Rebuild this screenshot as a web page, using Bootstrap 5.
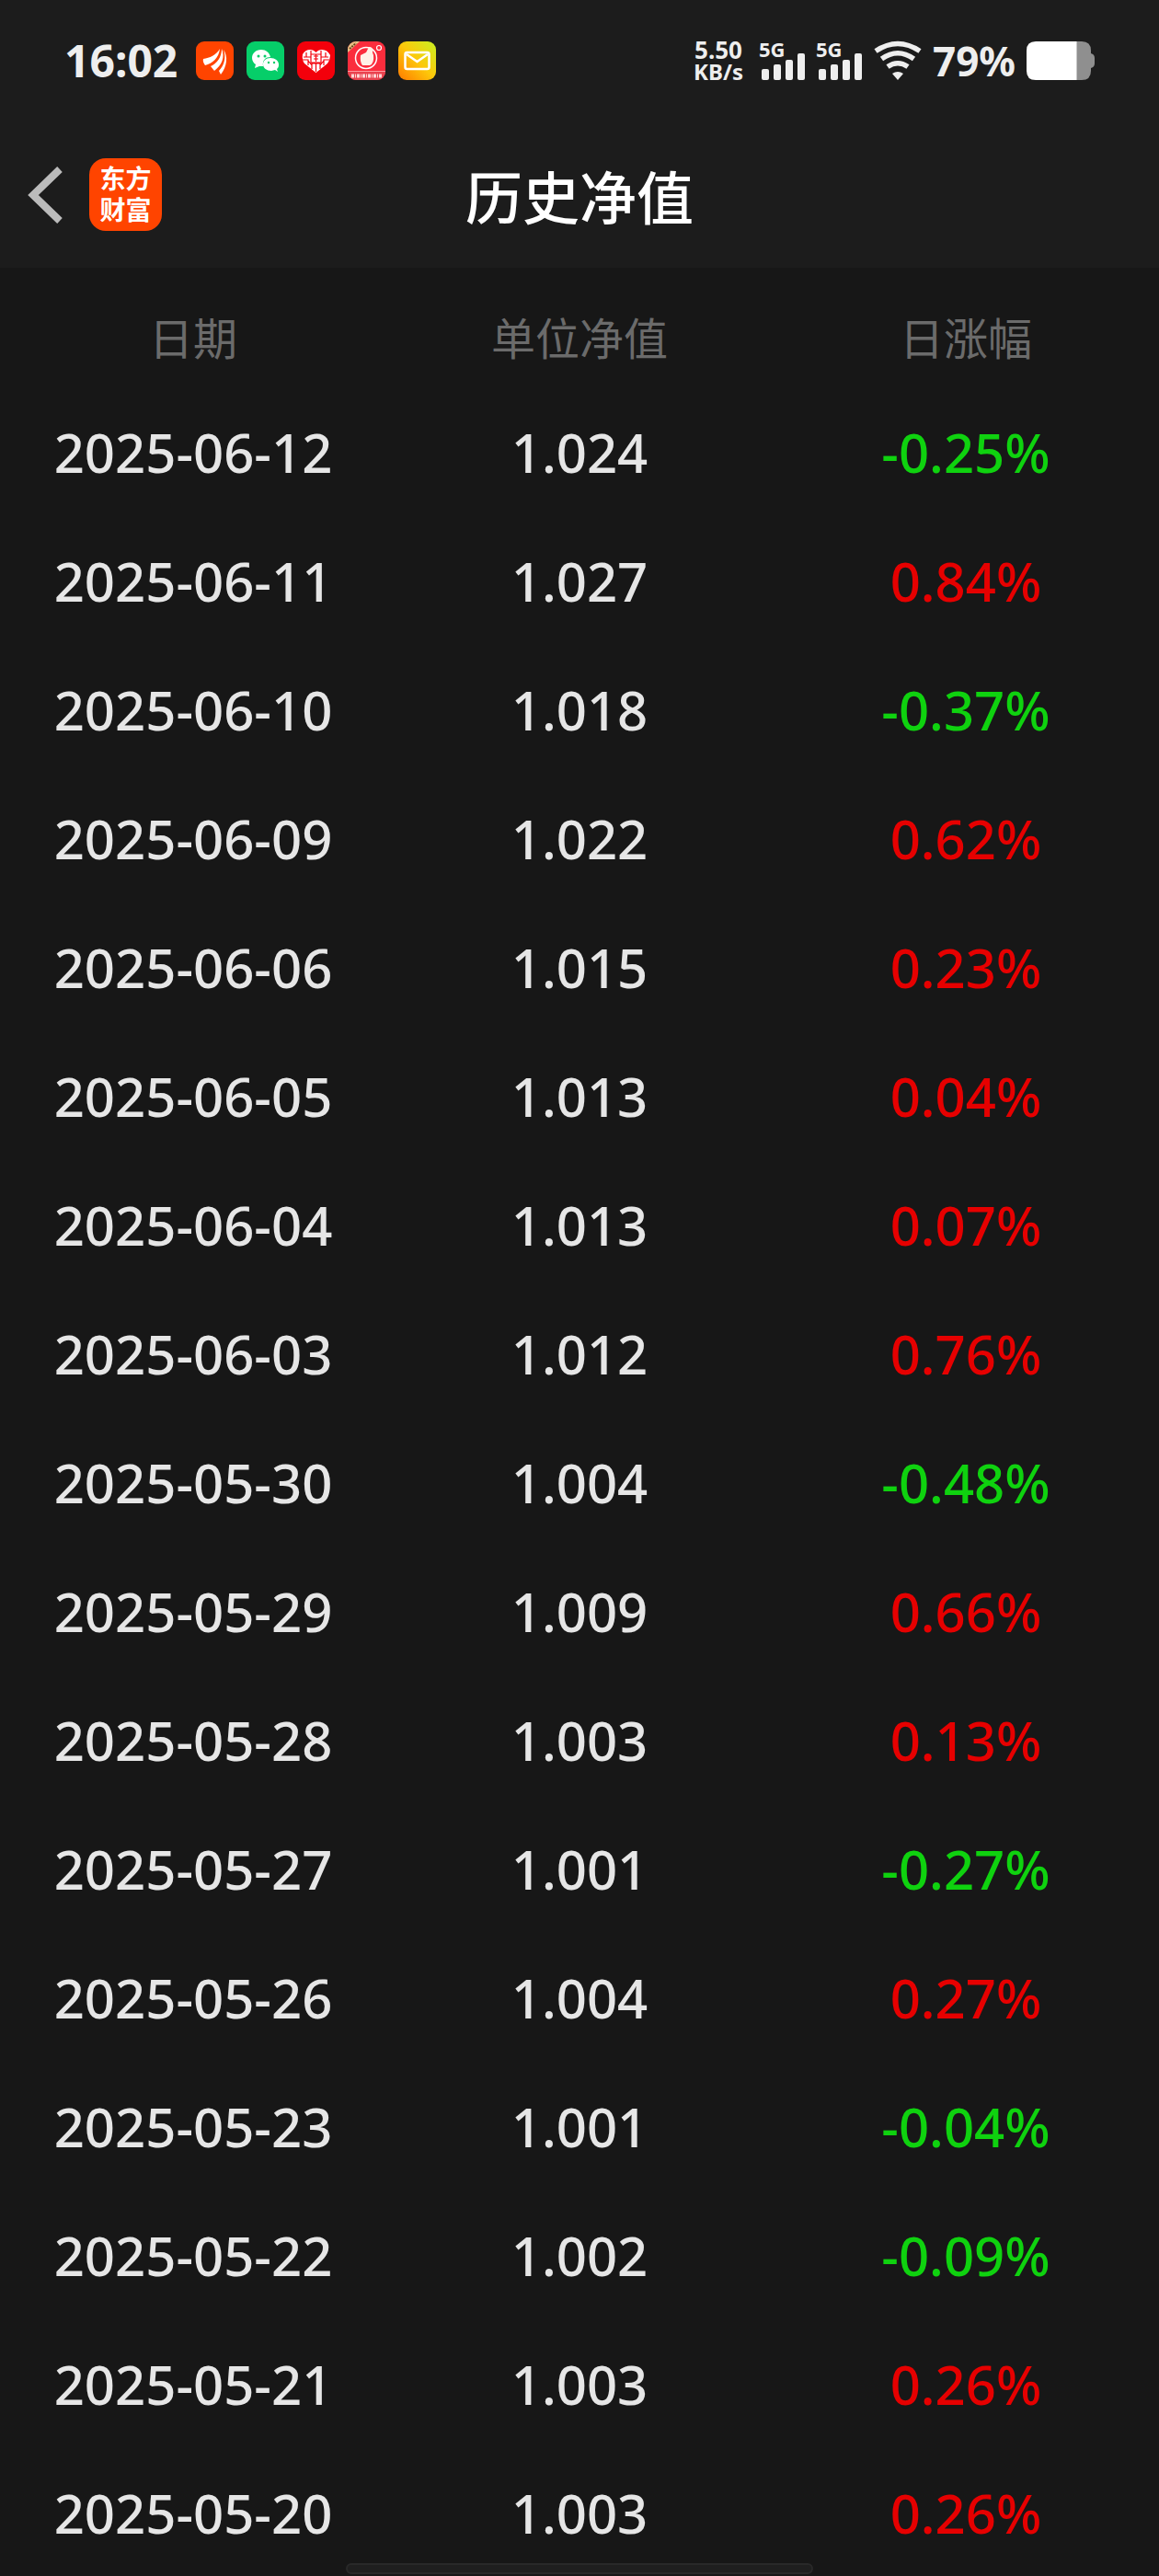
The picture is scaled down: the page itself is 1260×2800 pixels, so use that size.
<!DOCTYPE html>
<html lang="zh-CN">
<head>
<meta charset="utf-8">
<meta name="viewport" content="width=device-width, initial-scale=1">
<title>历史净值</title>
<link href="https://cdn.jsdelivr.net/npm/bootstrap@5.3.0/dist/css/bootstrap.min.css" rel="stylesheet">
<style>
  body { background: #171717; color: #e6e6e6; font-family: "Noto Sans", "Noto Sans CJK SC", sans-serif; }
  .top-area { background: #1c1c1c; }
  .status-bar { height: 132px; padding: 0 70px; color: #eee; font-weight: 700; }
  .clock { font-size: 48px; line-height: 60px; }
  .app-icons { gap: 14px; margin-left: 20px; }
  .net-speed { margin-right: 18px; font-size: 26px; line-height: 24px; }
  .net-speed small { font-size: 24px; line-height: 24px; }
  .pct { margin: 0 12px; font-size: 44px; line-height: 60px; }
  .status-bar svg, .title-bar svg { display: block; flex: none; overflow: visible; }
  .title-bar { height: 159px; }
  .title-bar h1 { font: 500 62px/80px "Noto Sans CJK SC", sans-serif; color: #fff; }
  .tools { left: 30px; gap: 28px; }
  .brand { width: 79px; height: 79px; padding-bottom: 3px; border-radius: 18px; background: #ff4400; color: #fff; font: 700 28px/34px "Noto Sans CJK SC", sans-serif; text-decoration: none; }
  .list-area { scrollbar-width: none; }
  .list-area::-webkit-scrollbar { display: none; }
  .nav-table { table-layout: fixed; --bs-table-bg: transparent; --bs-table-color: #e6e6e6; color: #e6e6e6; }
  .nav-table th { height: 131px; padding: 16px 0 0; font: 400 48px/64px "Noto Sans CJK SC", sans-serif; color: #6b6b6b; }
  .nav-table td { height: 140px; padding: 0; font-size: 58px; line-height: 80px; font-weight: 500; }
  .nav-table td.up { color: #e60000; }
  .nav-table td.down { color: #0fd20f; }
  .home-pill { width: 508px; height: 12px; bottom: 2px; background: #1f1f1f; border: 2px solid #292929; }
</style>
<script src="https://cdn.jsdelivr.net/npm/bootstrap@5.3.0/dist/js/bootstrap.bundle.min.js"></script>
</head>
<body>
<div class="vh-100 d-flex flex-column">
  <header class="top-area flex-shrink-0">
    <div class="status-bar d-flex align-items-center justify-content-between">
      <div class="d-flex align-items-center">
        <span class="clock">16:02</span>
        <div class="app-icons d-flex">
          <svg width="41" height="42" viewBox="0 0 41 42"><rect width="41" height="42" rx="9" fill="#ff4400"/><g fill="#fff"><path d="M8 19C15 18 22 15 26 8C25 18 18 24 10 26Q7 22 8 19Z"/><path d="M16 27C23 24 28 17 28 8C32 17 28 26 20 32Z"/><path d="M25 32C31 26 33 17 30 9C35 16 34 27 27 36Z"/></g></svg>
          <svg width="41" height="42" viewBox="0 0 41 42"><rect width="41" height="42" rx="9" fill="#06ce69"/><path d="M16 9C10 9 6 13 6 18C6 21 8 24 10 25L9 29L14 27H18C17 20 21 17 26 17C25 12 21 9 16 9Z" fill="#fff"/><path d="M26 18C21 18 18 21 18 25S22 32 27 32L31 31L34 33L33 30C35 28 35 27 35 25C35 21 31 18 26 18Z" fill="#fff"/><g fill="#06ce69"><circle cx="13" cy="16" r="1.5"/><circle cx="20" cy="16" r="1.5"/><circle cx="24" cy="23" r="1.2"/><circle cx="30" cy="23" r="1.2"/></g></svg>
          <svg width="41" height="42" viewBox="0 0 41 42"><rect width="41" height="42" rx="9" fill="#f3000b"/><path d="M20.500 34L8 24Q5 20 6 14Q9 9 14 9Q18 9 20.500 12Q23 9 27 9Q33 9 36 15Q36 20 33 24Z" fill="#fff"/><g fill="none" stroke="#f3000b" stroke-width="1.200"><path d="M7 17H15V10M34 17H26V10M12 26V20H6M29 26V20H35M16 30V24H25V30M15 23H26V14H15ZM10 12V17M31 12V17M20.500 24V33M18 16H23M18 19H23M20.500 14V22M12 21L16 26M29 21L25 26"/></g></svg>
          <svg width="41" height="42" viewBox="0 0 41 42"><defs><clipPath id="c4"><rect width="41" height="42" rx="9"/></clipPath></defs><g clip-path="url(#c4)"><rect width="41" height="42" fill="#fb2d3d"/><path d="M0 0H13L0 12Z" fill="#e6c184"/><path d="M2 8L9 2" stroke="#6b421c" stroke-width="2" stroke-dasharray="2 1"/><rect y="32" width="41" height="10" fill="#e9434f"/><path d="M0 32.500H41" stroke="#ff9a9f"/><circle cx="20" cy="18" r="11.500" fill="none" stroke="#fff" stroke-width="1.500"/><path d="M14 15L20 12L23 6Q28 5 27 12L28 15Q29 24 24 26H16Q13 22 14 15Z" fill="#fff1e7"/><circle cx="34" cy="7" r="2.500" fill="none" stroke="#fff" stroke-width="1.200"/><path d="M4 37.500H37" stroke="#ffd5d5" stroke-width="4" stroke-dasharray="3 1 1 1"/></g></svg>
          <svg width="41" height="42" viewBox="0 0 41 42"><defs><linearGradient id="g5" x1="0" y1="1" x2="1" y2="0"><stop offset="0" stop-color="#ff7a00"/><stop offset=".5" stop-color="#fdc80a"/><stop offset="1" stop-color="#c8f022"/></linearGradient></defs><rect width="41" height="42" rx="9" fill="url(#g5)"/><rect x="7.500" y="12" width="26" height="18" rx="2" fill="none" stroke="#fff" stroke-width="2.500"/><path d="M9 14L20.500 22L32 14" fill="none" stroke="#fff" stroke-width="2.500"/></svg>
        </div>
      </div>
      <div class="d-flex align-items-center">
        <div class="net-speed d-flex flex-column align-items-center"><span>5.50</span><small class="fw-bold">KB/s</small></div>
        <svg class="me-2" width="54" height="42" viewBox="0 0 54 42" fill="#eee"><text x="-1" y="17" font-size="22">5G</text><rect x="2" y="30" width="8" height="12" rx="2"/><rect x="15" y="25" width="8" height="17" rx="2"/><rect x="28" y="20" width="8" height="22" rx="2"/><rect x="41" y="13" width="8" height="29" rx="2"/></svg>
        <svg class="me-2" width="54" height="42" viewBox="0 0 54 42" fill="#eee"><text x="-1" y="17" font-size="22">5G</text><rect x="2" y="30" width="8" height="12" rx="2"/><rect x="15" y="25" width="8" height="17" rx="2"/><rect x="28" y="20" width="8" height="22" rx="2"/><rect x="41" y="13" width="8" height="29" rx="2"/></svg>
        <svg width="52" height="42" viewBox="0 0 52 42"><g fill="none" stroke="#eee" stroke-width="5.500"><path d="M2 10.500Q26 -5.500 50 10.500"/><path d="M8.500 19Q26 6.500 43.500 19"/><path d="M15 27.500Q26 20 37 27.500"/></g><path d="M20 35Q26 31 32 35L26 42Z" fill="#eee"/></svg>
        <span class="pct">79%</span>
        <svg width="74" height="42" viewBox="0 0 74 42"><path d="M54 0H60Q70 0 70 10V13Q74 14 74 18V24Q74 28 70 29V32Q70 42 60 42H54Z" fill="#8f8f8f"/><path d="M10 0H54.500V42H10Q0 42 0 32V10Q0 0 10 0Z" fill="#fff"/></svg>
      </div>
    </div>
    <div class="title-bar position-relative d-flex align-items-center justify-content-center">
      <div class="tools position-absolute d-flex align-items-center">
        <button type="button" class="btn p-0 border-0" aria-label="返回"><svg width="39" height="64" viewBox="0 0 39 64"><path d="M35 4L6 32L35 60" fill="none" stroke="#bbb" stroke-width="8"/></svg></button>
        <a href="#" class="brand d-flex flex-column align-items-center justify-content-center"><span>东方</span><span>财富</span></a>
      </div>
      <h1 class="m-0">历史净值</h1>
    </div>
  </header>
  <main class="list-area flex-grow-1 overflow-auto">
    <table class="nav-table table table-borderless text-center align-middle m-0">
      <thead class="align-middle"><tr><th scope="col">日期</th><th scope="col">单位净值</th><th scope="col">日涨幅</th></tr></thead>
      <tbody>
        <tr><td>2025-06-12</td><td>1.024</td><td class="down">-0.25%</td></tr>
        <tr><td>2025-06-11</td><td>1.027</td><td class="up">0.84%</td></tr>
        <tr><td>2025-06-10</td><td>1.018</td><td class="down">-0.37%</td></tr>
        <tr><td>2025-06-09</td><td>1.022</td><td class="up">0.62%</td></tr>
        <tr><td>2025-06-06</td><td>1.015</td><td class="up">0.23%</td></tr>
        <tr><td>2025-06-05</td><td>1.013</td><td class="up">0.04%</td></tr>
        <tr><td>2025-06-04</td><td>1.013</td><td class="up">0.07%</td></tr>
        <tr><td>2025-06-03</td><td>1.012</td><td class="up">0.76%</td></tr>
        <tr><td>2025-05-30</td><td>1.004</td><td class="down">-0.48%</td></tr>
        <tr><td>2025-05-29</td><td>1.009</td><td class="up">0.66%</td></tr>
        <tr><td>2025-05-28</td><td>1.003</td><td class="up">0.13%</td></tr>
        <tr><td>2025-05-27</td><td>1.001</td><td class="down">-0.27%</td></tr>
        <tr><td>2025-05-26</td><td>1.004</td><td class="up">0.27%</td></tr>
        <tr><td>2025-05-23</td><td>1.001</td><td class="down">-0.04%</td></tr>
        <tr><td>2025-05-22</td><td>1.002</td><td class="down">-0.09%</td></tr>
        <tr><td>2025-05-21</td><td>1.003</td><td class="up">0.26%</td></tr>
        <tr><td>2025-05-20</td><td>1.003</td><td class="up">0.26%</td></tr>
      </tbody>
    </table>
  </main>
</div>
<div class="home-pill position-fixed start-50 translate-middle-x rounded-pill"></div>
</body>
</html>
